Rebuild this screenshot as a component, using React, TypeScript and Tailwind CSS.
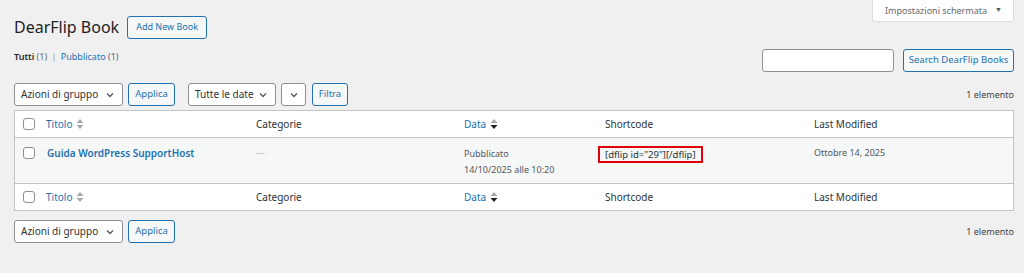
const blue = "text-[#2271b1]";

function SortIcon({ active }: { active?: boolean }) {
  return (
    <svg width="8" height="12" viewBox="0 0 8 12" className="ml-[4px] inline-block">
      <path d="M4 1 L7.5 5 H0.5 Z" fill="#a7aaad" />
      <path d="M4 11 L7.5 7 H0.5 Z" fill={active ? "#1d2327" : "#a7aaad"} />
    </svg>
  );
}

function Chevron() {
  return (
    <svg width="10" height="10" viewBox="0 0 10 10" className="shrink-0">
      <path d="M2 3.5 L5 6.5 L8 3.5" stroke="#50575e" strokeWidth="1.3" fill="none" />
    </svg>
  );
}

function Select({ label, w }: { label: string; w: string }) {
  return (
    <div
      className={`flex h-[23px] ${w} items-center justify-between whitespace-nowrap rounded-[3px] border border-[#8c8f94] bg-white pl-[6px] pr-[7px] text-[10px] text-[#2c3338]`}
    >
      <span>{label}</span>
      <Chevron />
    </div>
  );
}

function Button({ label, className = "" }: { label: string; className?: string }) {
  return (
    <div
      className={`flex h-[23px] items-center justify-center whitespace-nowrap rounded-[3px] border border-[#2271b1] bg-[#f6f7f7] text-[9.5px] ${blue} ${className}`}
    >
      {label}
    </div>
  );
}

function Checkbox() {
  return <div className="h-[12px] w-[12px] rounded-[3px] border border-[#8c8f94] bg-white" />;
}

function HeadRow({ top }: { top?: boolean }) {
  return (
    <div
      className={`flex h-[27px] items-center bg-white text-[10px] text-[#2c3338] ${
        top ? "border-b border-[#c3c4c7]" : "border-t border-[#c3c4c7]"
      }`}
    >
      <div className="flex w-[31px] pl-[8px]">
        <Checkbox />
      </div>
      <div className={`flex w-[210px] items-center ${blue}`}>
        Titolo <SortIcon />
      </div>
      <div className="w-[208px]">Categorie</div>
      <div className={`flex w-[141px] items-center ${blue}`}>
        Data <SortIcon active />
      </div>
      <div className="w-[209px]">Shortcode</div>
      <div>Last Modified</div>
    </div>
  );
}

export default function App() {
  return (
    <div className="h-[273px] w-[1024px] overflow-hidden bg-[#f0f0f1] font-['Noto_Sans',sans-serif] text-[#3c434a]">
      <div className="flex justify-end pr-[10px]">
        <div className="flex h-[22px] items-center gap-[8px] rounded-b-[3px] border border-t-0 border-[#dcdcde] bg-white pl-[12px] pr-[11px] text-[9px] text-[#646970]">
          Impostazioni schermata
          <span className="text-[7px] text-[#50575e]">▼</span>
        </div>
      </div>

      <div className="-mt-[7px] flex items-center px-[14px]">
        <h1 className="text-[16px] leading-[24px] text-[#1d2327]">DearFlip Book</h1>
        <div
          className={`ml-[8px] flex h-[23px] items-center rounded-[3px] border border-[#2271b1] bg-[#f6f7f7] px-[8px] text-[9px] ${blue}`}
        >
          Add New Book
        </div>
      </div>

      <div className="mt-[10px] flex items-start justify-between pl-[14px] pr-[10px]">
        <div className="mt-[1px] text-[9px] text-[#646970]">
          <span className="font-semibold text-[#1d2327]">Tutti</span> (1){" "}
          <span className="mx-[2px] text-[#a7aaad]">|</span> <span className={blue}>Pubblicato</span> (1)
        </div>
        <div className="flex items-center gap-[9px]">
          <div className="h-[23px] w-[132px] rounded-[3px] border border-[#8c8f94] bg-white" />
          <Button label="Search DearFlip Books" className="w-[111px]" />
        </div>
      </div>

      <div className="mt-[11px] flex items-center justify-between pl-[14px] pr-[10px]">
        <div className="flex items-center">
          <Select label="Azioni di gruppo" w="w-[109px]" />
          <Button label="Applica" className="ml-[5px] w-[47px]" />
          <Select label="Tutte le date" w="ml-[13px] w-[88px]" />
          <div className="ml-[5px] flex h-[23px] w-[25px] items-center justify-center rounded-[3px] border border-[#8c8f94] bg-white">
            <Chevron />
          </div>
          <Button label="Filtra" className="ml-[6px] w-[36px]" />
        </div>
        <div className="text-[9px] text-[#3c434a]">1 elemento</div>
      </div>

      <div className="ml-[14px] mr-[10px] mt-[4px] border border-[#c3c4c7]">
        <HeadRow top />
        <div className="flex h-[45px] items-start bg-[#f6f7f7] pt-[8px] text-[9px] text-[#50575e]">
          <div className="flex w-[31px] pl-[8px] pt-[1px]">
            <Checkbox />
          </div>
          <div className={`w-[210px] pl-[1px] text-[10px] font-semibold ${blue}`}>Guida WordPress SupportHost</div>
          <div className="w-[208px] text-[#a7aaad]">—</div>
          <div className="w-[141px] leading-[16px]">
            <div>Pubblicato</div>
            <div>14/10/2025 alle 10:20</div>
          </div>
          <div className="w-[209px]">
            <span className="-ml-[7px] inline-block border-2 border-[#e0000a] px-[5px] text-[9.5px] leading-[13px] text-[#2c3338]">
              [dflip id="29"][/dflip]
            </span>
          </div>
          <div>Ottobre 14, 2025</div>
        </div>
        <HeadRow />
      </div>

      <div className="mt-[9px] flex items-center justify-between pl-[14px] pr-[10px]">
        <div className="flex items-center">
          <Select label="Azioni di gruppo" w="w-[109px]" />
          <Button label="Applica" className="ml-[5px] w-[47px]" />
        </div>
        <div className="text-[9px] text-[#3c434a]">1 elemento</div>
      </div>
    </div>
  );
}
